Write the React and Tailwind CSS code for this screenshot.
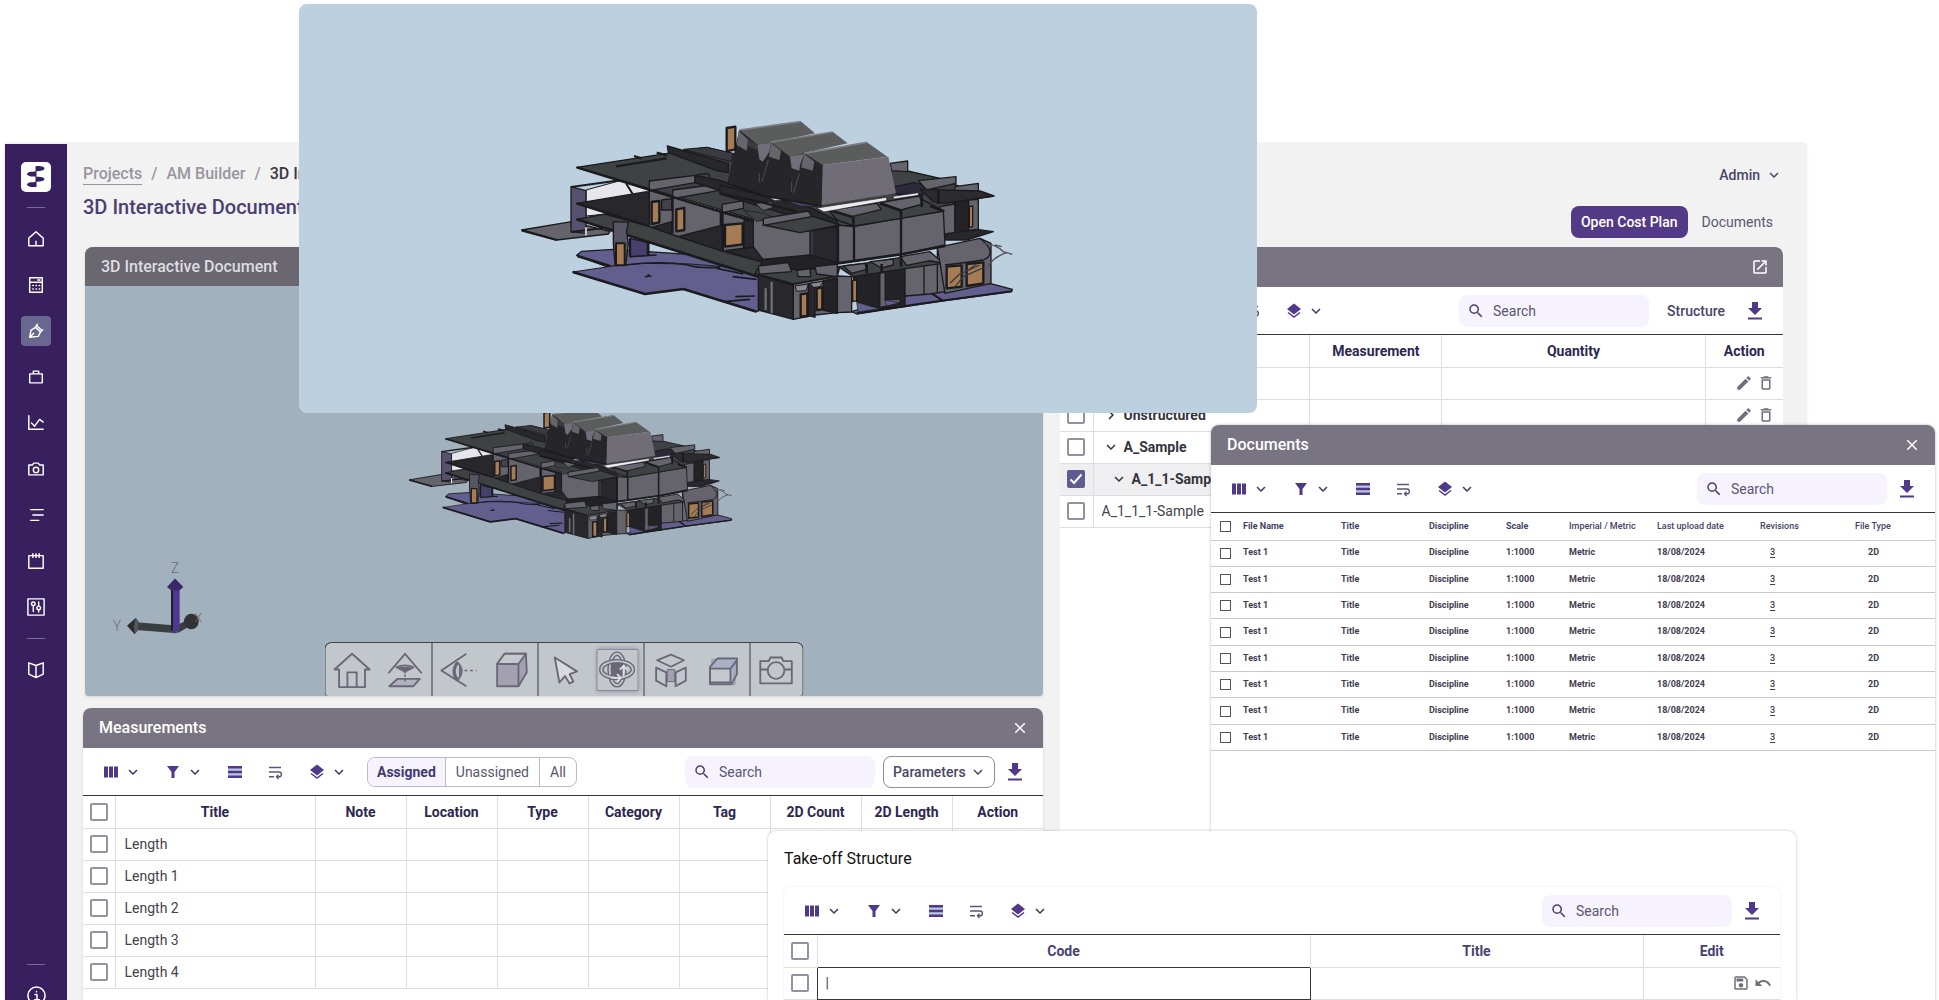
import React from 'react';
import {
    MdClose,
    MdDeleteOutline,
    MdEdit,
    MdKeyboardArrowDown,
    MdKeyboardArrowRight,
    MdOpenInNew,
    MdOutlineSave,
    MdSearch,
    MdUndo,
} from 'react-icons/md';

const DOC_ROWS = Array.from({ length: 8 }, (_, i) => i);
const DOC_COLUMNS = ['File Name', 'Title', 'Discipline', 'Scale', 'Imperial / Metric', 'Last upload date', 'Revisions', 'File Type'];
const MEASURE_COLUMNS = ['Title', 'Note', 'Location', 'Type', 'Category', 'Tag', '2D Count', '2D Length', 'Action'];
const MEASURE_ROWS = ['Length', 'Length 1', 'Length 2', 'Length 3', 'Length 4'];

const STRUCTURE_ROWS = [
    { name: 'Root', level: 0, open: false, actions: true },
    { name: 'Unstructured', level: 0, open: false, actions: true },
    { name: 'A_Sample', level: 0, open: true },
    { name: 'A_1_1-Sample', level: 1, open: true, checked: true },
    { name: 'A_1_1_1-Sample', leaf: true },
];

const NAV_ICONS = [
    { label: 'Home', d: 'M2 9 10 2l8 7v8.500H2zM10 17.500v-5' },
    { label: 'Estimates', d: 'M3 2h14v16H3zM3 7h14M12 4.500h2.500M6.500 10.500h.5M10 10.500h.5M13.500 10.500h.5M6.500 14.500h.5M10 14.500h.5M13.500 14.500h.5' },
    { label: 'Take-off', d: 'M3 17l1.500-8 5-3 5.500 5-2.500 5zM3 17l4.500-4.500M9 6l2.500-3.500M15 11l2.500-2.500M10.500 3.500l6 6', active: true },
    { label: 'Tenders', d: 'M3 6.500h14v10H3zM7 6.500v-3h6v3' },
    { label: 'Reports', d: 'M2 2v15h16M5 10l3.500 3.500L14 6l4 3' },
    { label: 'Captures', d: 'M2 5.500h4l1.500-2h5l1.500 2h4v11H2zM10 14a3 3 0 1 0 0-6 3 3 0 0 0 0 6' },
    { label: 'Schedule', d: 'M4 4h14M6.500 10H18M4 16h9' },
    { label: 'Calendar', d: 'M2 4h16v14H2zM6.500 2v4M10 2v4M13.500 2v4' },
    { label: 'Settings', d: 'M1 1h18v18H1zM7 8.500V15M7 8.500a2 2 0 1 0 0-4 2 2 0 0 0 0 4M13 4.500V9M13 13v2.500M13 13a2 2 0 1 0 0-4 2 2 0 0 0 0 4' },
];

const LINE = 'border-[#dedee0]';

function StrokeIcon({ d, className = 'w-[18px] h-[18px]' }) {
    return (
        <svg viewBox="0 0 20 20" className={className} fill="none" stroke="currentColor" strokeWidth="1.6" strokeLinejoin="round" strokeLinecap="round">
            <path d={d} />
        </svg>
    );
}

function Sidebar() {
    return (
        <nav className="w-[62px] shrink-0 bg-[#38205f] text-white flex flex-col items-center pt-[18px]">
            <a href="#home" aria-label="Home page" className="block">
                <svg viewBox="0 0 30 30" className="w-[30px] h-[30px]">
                    <rect width="30" height="30" rx="5" fill="#fff" />
                    <path
                        d="M14.500 4.200c6-.5 9 .6 9 2.300s-3 2.700-9 2.700zM15.500 9.500v5c-6 .4-9.500-.8-9.500-2.500s3.500-2.500 9.500-2.500zM14.500 14.800c6-.5 9 .6 9 2.300s-3 2.700-9 2.700zM15.500 20v5c-6 .4-9.500-.8-9.500-2.500S9.500 20 15.500 20zM14.500 4.200h1v20.800h-1z"
                        fill="#38205f"
                    />
                </svg>
            </a>
            <div className="w-[18px] h-px bg-[#7a6c98] mt-[15px] mb-4" />
            <div className="flex flex-col gap-4">
                {NAV_ICONS.map(item => (
                    <button
                        key={item.label}
                        aria-label={item.label}
                        className={`w-[30px] h-[30px] rounded-[4px] flex items-center justify-center ${item.active ? 'bg-[#69668f]' : ''}`}
                    >
                        <StrokeIcon d={item.d} />
                    </button>
                ))}
            </div>
            <div className="w-[18px] h-px bg-[#7a6c98] my-4" />
            <button aria-label="Library" className="w-[30px] h-[30px] flex items-center justify-center">
                <StrokeIcon d="M10 5 2 2v12.500l8 4 8-4V2zV18" />
            </button>
            <div className="mt-auto w-[18px] h-px bg-[#7a6c98] mb-[21px]" />
            <button aria-label="About" className="shrink-0 h-[14px] overflow-hidden flex items-start">
                <StrokeIcon d="M10 19a9 9 0 1 0 0-18 9 9 0 0 0 0 18M8.500 9H10.500V14M8 14.500h5M10 5.700v.3" className="w-[19px] h-[19px] shrink-0" />
            </button>
        </nav>
    );
}

function Check({ label, small, checked }) {
    return (
        <label className="relative flex items-center justify-center">
            <input
                type="checkbox"
                aria-label={label}
                defaultChecked={checked}
                className={`peer appearance-none bg-white checked:bg-[#5f5c92] checked:border-[#5f5c92] ${small ? 'w-[11px] h-[11px] border border-[#56535f]' : 'w-[18px] h-[18px] border-2 border-[#9492a2] rounded-[2px]'}`}
            />
            <svg viewBox="0 0 18 18" className="absolute w-[18px] h-[18px] hidden peer-checked:block pointer-events-none" fill="none" stroke="#fff" strokeWidth="2">
                <path d="M3.500 9.500 7 13l7.500-8.500" />
            </svg>
        </label>
    );
}

function ToolIcons() {
    const arrow = <MdKeyboardArrowDown className="w-[18px] h-[18px] text-[#3f3768]" />;
    return (
        <div className="flex items-center gap-[22px] text-[#503988]">
            <button aria-label="Columns" className="flex gap-1">
                <svg viewBox="0 0 18 18" className="w-[18px] h-[18px]" fill="currentColor">
                    <path d="M2 3.500h4v11H2zM7 3.500h4v11H7zM12 3.500h4v11h-4z" />
                </svg>
                {arrow}
            </button>
            <button aria-label="Filter" className="flex gap-1">
                <svg viewBox="0 0 18 18" className="w-[18px] h-[18px]" fill="currentColor">
                    <path d="M3 3h12l-4.500 6v6h-3V9z" />
                </svg>
                {arrow}
            </button>
            <button aria-label="Row height">
                <svg viewBox="0 0 18 18" className="w-[18px] h-[18px]" fill="currentColor">
                    <path d="M2 5h14v8H2z" fill="#b7cbe0" />
                    <path d="M2 3h14v2.500H2zM2 7.700h14v2.500H2zM2 12.500h14V15H2z" />
                </svg>
            </button>
            <button aria-label="Wrap text">
                <svg viewBox="0 0 18 18" className="w-[18px] h-[18px]" fill="none" stroke="#5d557d" strokeWidth="1.400">
                    <path d="M3 4.500h12M3 9h10a2.400 2.400 0 0 1 0 4.800h-2.500M3 13.800h5M12.500 11.700l-2 2.100 2 2.100" />
                </svg>
            </button>
            <button aria-label="Layers" className="flex gap-1 pl-0.5">
                <svg viewBox="0 0 18 18" className="w-[18px] h-[18px]" fill="currentColor">
                    <path d="M9 1.500 16 7l-7 5.500L2 7z" />
                    <path d="M3 10.500 9 15l6-4.500" fill="none" stroke="currentColor" strokeWidth="1.500" />
                </svg>
                {arrow}
            </button>
        </div>
    );
}

function Search() {
    return (
        <label className="w-[190px] h-8 rounded-lg bg-[#f6f3ff] flex items-center gap-2 pl-2 text-[#4b4468]">
            <MdSearch className="w-[18px] h-[18px] shrink-0" />
            <input type="text" placeholder="Search" aria-label="Search" className="w-full min-w-0 bg-transparent text-sm outline-none placeholder:text-[#5a5672]" />
        </label>
    );
}

function Download() {
    return (
        <button aria-label="Download" className="text-[#503988]">
            <svg viewBox="0 0 18 18" className="w-[18px] h-[18px]" fill="currentColor">
                <path d="M6 0h6v6h4l-7 7-7-7h4zM2 15.500h14v2H2z" />
            </svg>
        </button>
    );
}

function Toolbar({ left, children }) {
    return (
        <div className="h-12 shrink-0 flex items-center justify-between px-[19px] bg-white border-b border-[#35353a]">
            <div className="flex items-center gap-[19px]">
                <ToolIcons />
                {left}
            </div>
            <div className="flex items-center gap-[11px]">
                <div className="flex items-center gap-2">
                    <Search />
                    {children}
                </div>
                <Download />
            </div>
        </div>
    );
}

function PanelHeader({ title, children }) {
    return (
        <div className="h-10 shrink-0 flex items-center justify-between pl-4 pr-[14px] rounded-t-lg bg-[#797482] text-white">
            <h2 className="text-base font-medium">{title}</h2>
            {children}
        </div>
    );
}

// Massing model, drawn from the ground plates up to the roof volumes
function BuildingModel({ className }) {
    return (
        <svg viewBox="0 0 1620 750" preserveAspectRatio="none" className={className} stroke="#1b1b1f" strokeWidth="4" strokeLinejoin="round">
            {/* west half */}
            <g transform="translate(30 60)">
                <path d="M35 360 185 335 300 365 295 372 140 390z" fill="#65636b" />
                <path d="M35 361 140 390" strokeWidth="7" />
                <path d="M200 436 215 424 310 418 640 440 760 480 760 520 640 475 540 466 400 464 290 470z" fill="#625f8e" />
                <path d="M188 486 310 468 400 460 540 462 640 470 760 500 745 605 520 537 405 552z" fill="#625f8e" strokeWidth="3" />
                <path d="M188 486 405 552 520 537 740 605M202 438 300 468" fill="none" strokeWidth="8" />
                <path d="M345 465Q450 452 530 464 560 475 630 472M620 475 700 492M668 500 740 508M676 560 735 558M640 575 720 568M405 500 425 498M415 492v10M360 440 440 435" fill="none" strokeWidth="5" />
                <path d="M358 385 412 397 412 436 360 440z" fill="#46416c" />
                <path d="M415 390V436M360 385V440" strokeWidth="7" />

                <path d="M228 240 330 212 415 240 415 300 228 318z" fill="#e6e6ec" strokeWidth="3" />
                <path d="M183 230 228 242 228 370 183 365z" fill="#57506f" />
                <path d="M183 231 330 211M348 220 368 252M183 366 300 352" fill="none" strokeWidth="6" />
                <path d="M228 352V376" stroke="#e6e6ec" strokeWidth="5" />

                <path d="M418 240 490 262 640 305 780 345 780 450 640 430 490 375 418 350z" fill="#65636b" />
                <path d="M200 280 410 245 418 250 418 348z" fill="#28282c" />
                <path d="M200 280 418 350" strokeWidth="7" />
                <path d="M503 380 640 345 640 425z" fill="#28282c" />
                <path d="M425 352 485 335 485 374z" fill="#28282c" />
                <path d="M455 270 485 266 485 300 455 300z" fill="#44424a" />
                <path d="M488 262V370M632 308V345M638 310V425" fill="none" strokeWidth="6" />
                <path d="M700 340 732 330 732 410 700 420z" fill="#28282c" />
                <path d="M645 422 755 408 755 455z" fill="#28282c" />

                <path d="M200 328 285 312 418 350 490 375 640 425 800 468 860 500 860 540 745 500z" fill="#3f4242" />
                <path d="M200 328 745 500" strokeWidth="8" />
                <path d="M310 335 355 337 350 365 355 400 347 466 315 466 310 400z" fill="#575463" />
                <path d="M318 400 344 400 344 466 318 466z" fill="#a67c55" strokeWidth="6" />

                <path d="M200 172 590 112 680 135 760 200 1180 180 1290 205 1400 250 1450 258 1340 275 1300 300 1000 350 870 368z" fill="#3f4242" />
                <path d="M590 112 670 130 665 155 520 118z" fill="#3a3a40" strokeWidth="3" />
                <path d="M472 108 655 160 655 188 620 182 475 128z" fill="#28282c" />
                <path d="M372 138 395 145M440 128 470 136M318 169 470 145" strokeWidth="7" />
                <path d="M418 213 555 196 555 218 418 242z" fill="#65636b" />
                <path d="M560 195 595 190 600 202" fill="none" />
                <path d="M488 240 625 222 625 242 500 264 488 258z" fill="#65636b" />
                <path d="M555 196 625 210 780 262 780 292 625 240 555 218z" fill="#28282c" />
                <path d="M637 283 700 272 700 295 637 308z" fill="#65636b" />
                <path d="M200 172 640 308 770 345" fill="none" strokeWidth="7" />

                <g fill="#a67c55" strokeWidth="7">
                    <path d="M425 276 448 273 448 337 425 342z" />
                    <path d="M499 298 523 294 523 360 499 364z" />
                    <path d="M645 345 698 340 698 403 645 410z" />
                </g>
            </g>

            {/* east half */}
            <g transform="translate(600 60)">
                <path d="M455 605 600 560 870 520 937 538 935 545 725 573 600 592 470 612z" fill="#625f8e" />
                <path d="M470 610 600 590 725 572 935 544M695 550 728 572" fill="none" strokeWidth="6" />
                <path d="M160 325 330 360 412 352 412 460 330 450 190 450 160 410z" fill="#65636b" />
                <path d="M330 362 412 350 412 462 330 440z" fill="#28282c" />
                <path d="M336 366V440" stroke="#44424a" />
                <path d="M132 330 160 335 160 410 132 415z" fill="#28282c" />

                {/* lower storey */}
                <path d="M185 448 330 435 412 458 412 480 290 520 180 500z" fill="#222226" />
                <path d="M175 495 280 525 280 628 175 600z" fill="#28282c" />
                <path d="M197 535V600M215 515V610" stroke="#6f6c76" strokeWidth="7" />
                <path d="M280 522 412 498 455 500 455 606 412 608 345 615 280 628z" fill="#65636b" />
                <path d="M325 522 345 518 345 622 325 615z" fill="#28282c" />
                <path d="M370 512 412 504 412 610 370 600z" fill="#232327" />
                <path d="M460 500 615 470 615 590 540 595 470 575z" fill="#232327" />
                <path d="M540 490 555 487 555 570 600 568 600 578 540 592z" fill="#65636b" strokeWidth="3" />
                <path d="M470 578 540 596 475 606zM555 570 600 578 560 588z" fill="#625f8e" strokeWidth="2" />
                <path d="M615 470 735 455 735 545 690 552 615 558z" fill="#65636b" />
                <path d="M672 470V552M712 410V548" strokeWidth="4" />
                <path d="M165 490 280 522 412 498 420 470 300 480 180 466z" fill="#3f4242" />
                <path d="M175 468 265 458 275 485 178 492z" fill="#65636b" />
                <path d="M290 482 330 476 332 500 295 500z" fill="#65636b" />
                <path d="M345 470 412 462 412 500 350 492z" fill="#65636b" />
                <path d="M285 528 325 522 318 542 290 544zM330 520 370 514 360 530 340 532z" fill="#8a8892" strokeWidth="3" />
                <path d="M415 470 530 455 615 440 730 460 615 476 460 500z" fill="#3f4242" />
                <path d="M430 468 495 460 500 478 455 490z" fill="#65636b" />
                <path d="M510 455 580 447 580 465 545 474z" fill="#65636b" />
                <path d="M600 440 690 425 730 460 690 452 620 466z" fill="#65636b" />
                <path d="M500 460V490M545 462V490M603 435V470" strokeWidth="8" />
                <path d="M712 412 840 385 873 400 873 520 735 550z" fill="#65636b" />
                <path d="M840 385Q895 430 850 450 800 458 735 465" fill="none" />
                <path d="M740 470 785 466 785 530 740 535zM800 462 850 457 850 520 800 528z" fill="#a67c55" strokeWidth="7" />
                <path d="M750 520 778 493 840 465M765 530 790 500 812 490 845 475M805 480 830 462" fill="none" stroke="#3d3a40" />
                <path d="M845 400Q885 400 910 425L937 433M860 475Q880 440 920 428M885 405 905 410" fill="none" stroke="#55505a" />

                {/* right wing */}
                <path d="M720 290 765 282 765 375 735 385 725 345z" fill="#65636b" />
                <path d="M765 278 806 272 806 388 765 375z" fill="#232327" />
                <path d="M806 270 835 268 835 360 806 370z" fill="#65636b" />
                <path d="M808 290 818 288 818 350 808 352z" fill="#a67c55" />
                <path d="M735 372 830 358 880 365 800 390 735 390z" fill="#28282c" />
                <path d="M570 160 623 153 623 185 575 182z" fill="#65636b" />
                <path d="M560 235 640 218 710 232 665 255 590 252z" fill="#2c2a3a" />
                <path d="M655 212 768 200 768 220 680 240z" fill="#65636b" />
                <path d="M765 230 835 220 835 245 765 248z" fill="#65636b" />
                <path d="M660 238 840 243 882 258 735 280 700 275z" fill="#2c2c30" />

                {/* upper block */}
                <path d="M412 345 460 350 600 325 730 303 735 405 610 432 460 454 414 460z" fill="#65636b" />
                <path d="M462 348V450M603 322V430M414 340V462" strokeWidth="7" />
                <path d="M412 460 610 432 735 408" fill="none" strokeWidth="8" />
                <path d="M385 300 540 275 660 265 732 303 603 325 462 348 412 330z" fill="#3f4242" />
                <path d="M388 300 530 280 545 298 455 320z" fill="#65636b" />
                <path d="M540 278 658 258 668 282 603 300z" fill="#65636b" />
                <path d="M388 300 460 322 460 345M540 280 603 302 603 322M665 255V290M715 240V282M690 288 732 304" fill="none" strokeWidth="8" />

                {/* parapets in front of the roof volumes */}
                <path d="M60 225 330 292 412 332 412 352 330 335 60 252z" fill="#28282c" />
                <path d="M130 300 190 310 215 320 170 335z" fill="#3f4242" strokeWidth="2" />
                <path d="M165 280 215 275 220 292 190 302z" fill="#65636b" strokeWidth="3" />
                <path d="M190 345 335 318 420 345 300 368z" fill="#3f4242" />
                <path d="M190 325 325 303 335 320 190 346z" fill="#65636b" />
                <path d="M60 250 190 278 290 306" fill="none" strokeWidth="7" />
                <path d="M210 265 240 260 248 270 225 272z" fill="#e2e2ea" strokeWidth="2" />
                <path d="M245 268 270 265 350 290 300 288z" fill="#4a4468" strokeWidth="2" />
                <path d="M350 294 560 262 560 272 372 306zM580 259 655 248 655 256 580 267z" fill="#ececf0" strokeWidth="2" />

                <g stroke="none">
                    <path d="M118 60 82 218 190 255 365 287 372 162 315 130 215 98z" fill="#26262a" />
                    <path d="M118 60 302 34 345 70 215 98 175 106z" fill="#5a5d5c" />
                    <path d="M116 62 145 90 140 122 110 105z" fill="#67656b" />
                    <path d="M143 88 175 104 172 120 142 108z" fill="#3b3b40" />
                    <path d="M172 105 213 98 208 125 188 155 178 148z" fill="#716e79" />
                    <path d="M213 96 398 65 443 100 310 130 272 142z" fill="#5a5d5c" />
                    <path d="M213 98 243 122 238 150 207 140z" fill="#67656b" />
                    <path d="M270 140 313 131 300 165 298 182 275 175z" fill="#716e79" />
                    <path d="M313 130 500 96 562 140 368 165z" fill="#5a5d5c" />
                    <path d="M313 132 343 155 338 182 303 172z" fill="#67656b" />
                    <path d="M368 165 565 140 588 250 365 285z" fill="#706d77" />
                    <path d="M118 60 302 35M213 96 398 66M313 130 500 97" stroke="#807e86" strokeWidth="5" fill="none" />
                    <path d="M178 190V216M275 215V245M205 150 186 215M298 190 280 250" stroke="#4f4d57" strokeWidth="3" fill="none" />
                </g>
                <path d="M82 220 190 257 365 288" fill="none" strokeWidth="6" />

                <g fill="#a67c55" strokeWidth="7">
                    <path d="M80 54 106 50 106 118 80 124z" />
                    <path d="M302 553 322 550 322 618 302 620z" />
                    <path d="M350 536 367 532 367 598 350 600z" />
                    <path d="M458 512 470 510 470 572 458 575z" strokeWidth="4" />
                </g>
            </g>
        </svg>
    );
}

function AxisGizmo() {
    return (
        <svg viewBox="340 1205 270 225" preserveAspectRatio="none" className="absolute left-7 bottom-14 w-[90px] h-20">
            <g fontFamily="Roboto, sans-serif" fontSize="40" fontWeight="300" fill="#6a6590">
                <text x="514" y="1242">Z</text>
                <text x="340" y="1404">Y</text>
            </g>
            <path d="M410 1380 530 1389 532 1411 410 1402z" fill="#3b3e3f" />
            <path d="M382 1390 408 1368 416 1378 415 1402 405 1414z" fill="#2c2d31" />
            <path d="M408 1368 416 1378 415 1402 405 1414 402 1390z" fill="#55555e" />
            <path d="M528 1390 560 1375 568 1392 535 1410z" fill="#3b3e3f" />
            <ellipse cx="575" cy="1378" rx="22" ry="22" fill="#313335" />
            <path d="M514 1282h26v118l-13 12-13-10z" fill="#4f3790" />
            <path d="M514 1282h6v122l-6-2z" fill="#1f1c2c" />
            <path d="M526 1257 551 1281 540 1290H514L502 1281z" fill="#3a2869" />
            <text x="584" y="1380" fontFamily="Roboto, sans-serif" fontSize="38" fontWeight="300" fill="#8d5d62">X</text>
        </svg>
    );
}

const VIEW_TOOLS = [
    [
        { label: 'Home view', art: <path d="M1 20 20 3l19 17h-5v19H6V20zM15 39V23h10v16" /> },
        { label: 'Look down', art: <><path d="M2 24 20 3l18 21M10 18q10-5 20 0" /><path d="M11 17q9 8 18 0" fill="#a3a1b0" /><path d="M15 18h10l-5 5z" fill="#6b6777" /><path d="M3 38 12 30h24l-7 8z" fill="#b2b2bd" /><path d="M20 25v9" strokeDasharray="3 2" strokeWidth="1.500" /></> },
    ],
    [
        { label: 'Field of view', art: <><path d="M29 3 2 21l27 17" /><path d="M19 12q10 9 0 20-8-10 0-20" fill="#c2c7cb" /><path d="M20 13q-7 8 0 18M22 16v11" /><path d="M27 21h13" strokeDasharray="3 3" strokeWidth="1.500" /></> },
        { label: 'Box', art: <><path d="M5 14 13 3h23l1 20-9 15H5z" fill="#a3a1b0" /><path d="M5 14 13 3h23l-8 11z" fill="#c4c9ce" /><path d="M28 14v24" /></> },
    ],
    [
        { label: 'Select', art: <path d="M10 7 34 22l-8 3 4 8-4 2-5-8-6 7z" fill="#d8dade" /> },
        { label: 'Orbit', active: true, art: <><circle cx="20" cy="20" r="8" fill="#6b6876" /><ellipse cx="20" cy="20" rx="8" ry="17" strokeWidth="5" /><ellipse cx="20" cy="20" rx="8" ry="17" stroke="#c2c7cb" strokeWidth="2" /><ellipse cx="20" cy="20" rx="17" ry="9" strokeWidth="5" /><ellipse cx="20" cy="20" rx="17" ry="9" stroke="#c2c7cb" strokeWidth="2" /><path d="M27 27V17M23 20l4-4 4 4M14 29h10l-4-4M24 29l-4 4" stroke="#dcdee2" strokeWidth="2" /></> },
    ],
    [
        { label: 'Explode', art: <><path d="M6 10 21 4l14 6-14 7z" /><path d="M5 18 16 23v15L5 32z" /><path d="M37 18 26 23v15l11-6z" /><path d="M17 20h8v13h-8z" fill="#a3a1b0" strokeWidth="1" /></> },
        { label: 'Section', art: <><path d="M6 9h25v27H6z" fill="#a9b1c4" stroke="#8b94ad" strokeWidth="1" transform="translate(2 0)" /><path d="M6 17 14 8h21v17l-6 11H6z" /><path d="M6 19h22v15H6z" fill="#c4c9ce" /><path d="M28 19l7-9" /></> },
    ],
    [{ label: 'Snapshot', art: <><path d="M3 11h9l2-4h12l2 4h9v24H3zM3 20h9M29 20h8" /><circle cx="20" cy="21" r="9" /></> }],
];

function ViewerToolbar() {
    return (
        <div className="absolute bottom-0 left-1/2 -translate-x-1/2 h-[54px] flex rounded-t-[7px] rounded-b-[4px] border border-b-0 border-[#44444a] bg-[#c2c7cb]">
            {VIEW_TOOLS.map((group, i) => (
                <div key={i} className={`flex ${i > 0 ? 'border-l border-[#3c3c42]' : ''} ${group.length > 1 ? 'w-[106px]' : 'w-[53px]'}`}>
                    {group.map(tool => (
                        <button key={tool.label} aria-label={tool.label} className="flex-1 flex items-center justify-center">
                            <span className={tool.active ? 'w-[42px] h-[42px] flex items-center justify-center border border-[#8b8996] shadow-[0_0_5px_#8d8aa8]' : ''}>
                                <svg viewBox="0 0 41 41" className="w-[38px] h-[38px]" fill="none" stroke="#6b6777" strokeWidth="2" strokeLinejoin="round">
                                    {tool.art}
                                </svg>
                            </span>
                        </button>
                    ))}
                </div>
            ))}
        </div>
    );
}

function Viewer() {
    return (
        <section className="ml-0.5 mt-[26px] h-[449px] shrink-0 flex flex-col rounded-t-lg rounded-b-[4px] overflow-hidden bg-[#a1b1be] shadow">
            <div className="h-[39px] shrink-0 flex items-center px-4 bg-[#6a6771] text-[#dedde1]">
                <h2 className="text-base font-medium">3D Interactive Document</h2>
            </div>
            <div className="relative flex-1">
                <BuildingModel className="absolute left-[310px] bottom-[144px] w-[355px] h-[164px]" />
                <AxisGizmo />
                <ViewerToolbar />
            </div>
        </section>
    );
}

function Measurements() {
    return (
        <section className="mt-3 flex-1 flex flex-col rounded-t-lg bg-white shadow">
            <PanelHeader title="Measurements">
                <button aria-label="Close measurements"><MdClose className="w-[18px] h-[18px]" /></button>
            </PanelHeader>
            <Toolbar
                left={
                    <div className="h-[30px] flex rounded-lg border border-[#bcbcc6] overflow-hidden text-sm text-[#5a5672]">
                        <button className="px-[9px] font-bold bg-[#f6f3ff] text-[#443a70]">Assigned</button>
                        <button className="px-[10px] border-x border-[#bcbcc6]">Unassigned</button>
                        <button className="px-[10px]">All</button>
                    </div>
                }
            >
                <button className="w-28 h-8 pl-[9px] pr-[7px] flex items-center justify-between rounded-lg border border-[#8f8c9e] text-sm font-medium text-[#4b4468]">
                    Parameters
                    <MdKeyboardArrowDown className="w-[18px] h-[18px]" />
                </button>
            </Toolbar>
            <table className="w-full table-fixed border-collapse text-sm text-[#45434d]">
                <colgroup>
                    <col className="w-8" />
                    <col className="w-[200px]" />
                    {MEASURE_COLUMNS.slice(1).map(name => <col key={name} />)}
                </colgroup>
                <thead>
                    <tr className={`h-8 border-b ${LINE}`}>
                        <th><Check label="Select all measurements" /></th>
                        {MEASURE_COLUMNS.map(name => (
                            <th key={name} className={`border-l ${LINE} font-bold text-[#2d2752]`}>{name}</th>
                        ))}
                    </tr>
                </thead>
                <tbody>
                    {MEASURE_ROWS.map(row => (
                        <tr key={row} className={`h-8 border-b ${LINE}`}>
                            <td><Check label={row} /></td>
                            <td className={`border-l ${LINE} pl-[9px]`}>{row}</td>
                            {MEASURE_COLUMNS.slice(1).map(name => <td key={name} className={`border-l ${LINE}`} />)}
                        </tr>
                    ))}
                </tbody>
            </table>
        </section>
    );
}

function Structure() {
    return (
        <section className="mt-[9px] flex-1 flex flex-col rounded-t-lg bg-white">
            <PanelHeader title="Structure">
                <button aria-label="Open in new window"><MdOpenInNew className="w-[18px] h-[18px]" /></button>
            </PanelHeader>
            <Toolbar>
                <button className="px-[10px] text-sm font-medium text-[#4b4468]">Structure</button>
            </Toolbar>
            <table className="w-full table-fixed border-collapse text-sm text-[#45434d]">
                <colgroup>
                    <col className="w-[33px]" />
                    <col className="w-[30%]" />
                    <col className="w-[132px]" />
                    <col />
                    <col className="w-[78px]" />
                </colgroup>
                <thead>
                    <tr className={`h-8 border-b ${LINE} text-[#2d2752]`}>
                        <th><Check label="Select all structures" /></th>
                        <th className={`border-l ${LINE}`}>Code</th>
                        <th className={`border-l ${LINE}`}>Measurement</th>
                        <th className={`border-l ${LINE}`}>Quantity</th>
                        <th className={`border-l ${LINE}`}>Action</th>
                    </tr>
                </thead>
                <tbody>
                    {STRUCTURE_ROWS.map(row => (
                        <tr key={row.name} className={`h-8 border-b ${LINE} ${row.checked ? 'bg-[#efeff1]' : ''}`}>
                            <td><Check label={row.name} checked={row.checked} /></td>
                            <td className={`border-l ${LINE} whitespace-nowrap overflow-hidden`}>
                                {row.leaf ? (
                                    <span className="pl-2">{row.name}</span>
                                ) : (
                                    <button className={`flex items-center gap-1 font-bold text-[#35333d] ${row.level ? 'pl-4' : 'pl-2'}`}>
                                        {row.open ? <MdKeyboardArrowDown className="w-[18px] h-[18px]" /> : <MdKeyboardArrowRight className="w-[18px] h-[18px]" />}
                                        {row.name}
                                    </button>
                                )}
                            </td>
                            <td className={`border-l ${LINE}`} />
                            <td className={`border-l ${LINE}`} />
                            <td className={`border-l ${LINE}`}>
                                {row.actions && (
                                    <div className="flex justify-end gap-1 pr-2 text-[#716d7c]">
                                        <button aria-label={`Edit ${row.name}`}><MdEdit className="w-[18px] h-[18px]" /></button>
                                        <button aria-label={`Delete ${row.name}`}><MdDeleteOutline className="w-[18px] h-[18px]" /></button>
                                    </div>
                                )}
                            </td>
                        </tr>
                    ))}
                </tbody>
            </table>
        </section>
    );
}

function DocumentsWindow() {
    return (
        <section className="absolute left-[1211px] right-1 top-[425px] bottom-0 flex flex-col rounded-t-lg bg-white shadow-[0_0_3px_rgba(0,0,0,0.3)]">
            <PanelHeader title="Documents">
                <button aria-label="Close documents"><MdClose className="w-[18px] h-[18px]" /></button>
            </PanelHeader>
            <Toolbar />
            <table className="w-full h-[238px] table-fixed border-collapse text-left text-[9px] text-[#3f3c4e]">
                <colgroup>
                    <col className="w-8" />
                    <col className="w-[98px]" />
                    <col className="w-[88px]" />
                    <col className="w-[77px]" />
                    <col className="w-[63px]" />
                    <col className="w-[88px]" />
                    <col className="w-[103px]" />
                    <col className="w-[95px]" />
                    <col />
                </colgroup>
                <thead>
                    <tr className="h-[27px] border-b border-[#c9c9cd] text-[#443f66]">
                        <th className="pr-1"><Check small label="Select all documents" /></th>
                        {DOC_COLUMNS.map((name, i) => (
                            <th key={name} className={i < 4 ? 'font-bold' : 'font-medium'}>{name}</th>
                        ))}
                    </tr>
                </thead>
                <tbody>
                    {DOC_ROWS.map(i => (
                        <tr key={i} className="h-[26px] border-b border-[#c9c9cd] font-bold">
                            <td className="pr-1"><Check small label={`Select document ${i + 1}`} /></td>
                            <td>Test 1</td>
                            <td>Title</td>
                            <td>Discipline</td>
                            <td>1:1000</td>
                            <td>Metric</td>
                            <td>18/08/2024</td>
                            <td className="pl-[10px]"><a href="#revisions" className="underline underline-offset-2 font-medium">3</a></td>
                            <td className="pl-[13px]">2D</td>
                        </tr>
                    ))}
                </tbody>
            </table>
        </section>
    );
}

function TakeoffWindow() {
    return (
        <section className="absolute left-[768px] right-[143px] top-[831px] pt-4 px-4 rounded-t-lg bg-white shadow-[0_0_3px_rgba(0,0,0,0.25)]">
            <h2 className="text-base leading-6 text-[#111]">Take-off Structure</h2>
            <div className="mt-4 rounded-t-lg overflow-hidden shadow-[0_0_2px_rgba(0,0,0,0.12)]">
                <Toolbar />
                <table className="w-full table-fixed border-collapse text-sm">
                    <colgroup>
                        <col className="w-[33px]" />
                        <col className="w-[493px]" />
                        <col />
                        <col className="w-[137px]" />
                    </colgroup>
                    <thead>
                        <tr className={`h-8 border-b ${LINE} text-[#4a4172]`}>
                            <th><Check label="Select all codes" /></th>
                            <th className={`border-l ${LINE}`}>Code</th>
                            <th className={`border-l ${LINE}`}>Title</th>
                            <th className={`border-l ${LINE}`}>Edit</th>
                        </tr>
                    </thead>
                    <tbody>
                        <tr className={`h-8 border-b ${LINE}`}>
                            <td><Check label="Select code" /></td>
                            <td className="border border-[#35353a]">
                                <input type="text" aria-label="Code" defaultValue="|" className="block w-full pl-2 outline-none text-[#45434d]" />
                            </td>
                            <td className={`border-l ${LINE}`} />
                            <td className={`border-l ${LINE}`}>
                                <div className="flex justify-end gap-1 pr-2 text-[#716d7c]">
                                    <button aria-label="Save"><MdOutlineSave className="w-[18px] h-[18px]" /></button>
                                    <button aria-label="Undo"><MdUndo className="w-[18px] h-[18px]" /></button>
                                </div>
                            </td>
                        </tr>
                    </tbody>
                </table>
            </div>
        </section>
    );
}

export default function App() {
    return (
        <div className="relative h-screen overflow-hidden bg-white pt-36 pl-[5px] pr-[133px] font-[Roboto,sans-serif]">
            <div className="h-full flex bg-[#f2f2f2] shadow-[0_0_3px_rgba(0,0,0,0.15)]">
                <Sidebar />
                <main className="flex-1 min-w-0 grid grid-cols-[960fr_723fr] gap-[17px] pl-4 pr-[23px]">
                    <div className="min-w-0 flex flex-col pt-[18px]">
                        <div className="flex items-center gap-[9px] text-base leading-6 font-medium text-[#98959f]">
                            <a href="#projects" className="leading-5 border-b border-[#98959f]">Projects</a>
                            <span>/</span>
                            <span>AM Builder</span>
                            <span>/</span>
                            <span className="text-[#3a3842]">3D Interactive Document</span>
                        </div>
                        <h1 className="mt-[7px] text-xl leading-7 font-medium text-[#4b4072]">3D Interactive Document</h1>
                        <Viewer />
                        <Measurements />
                    </div>
                    <div className="min-w-0 flex flex-col pt-[19px]">
                        <button className="self-end flex items-center gap-[5px] text-sm leading-6 font-medium text-[#4b4468]">
                            Admin
                            <MdKeyboardArrowDown className="w-[18px] h-[18px]" />
                        </button>
                        <div className="mt-[19px] flex justify-end text-sm">
                            <button className="h-8 px-[10px] rounded-lg bg-[#523a87] text-white font-medium">Open Cost Plan</button>
                            <button className="h-8 pl-[14px] pr-[10px] text-[#5a5672]">Documents</button>
                        </div>
                        <Structure />
                    </div>
                </main>
            </div>
            <DocumentsWindow />
            <TakeoffWindow />
            <section className="absolute left-[299px] right-[682px] top-1 h-[409px] rounded-lg bg-[#bdd0df]">
                <BuildingModel className="absolute left-[201px] top-[86px] w-[540px] h-[250px]" />
            </section>
        </div>
    );
}
